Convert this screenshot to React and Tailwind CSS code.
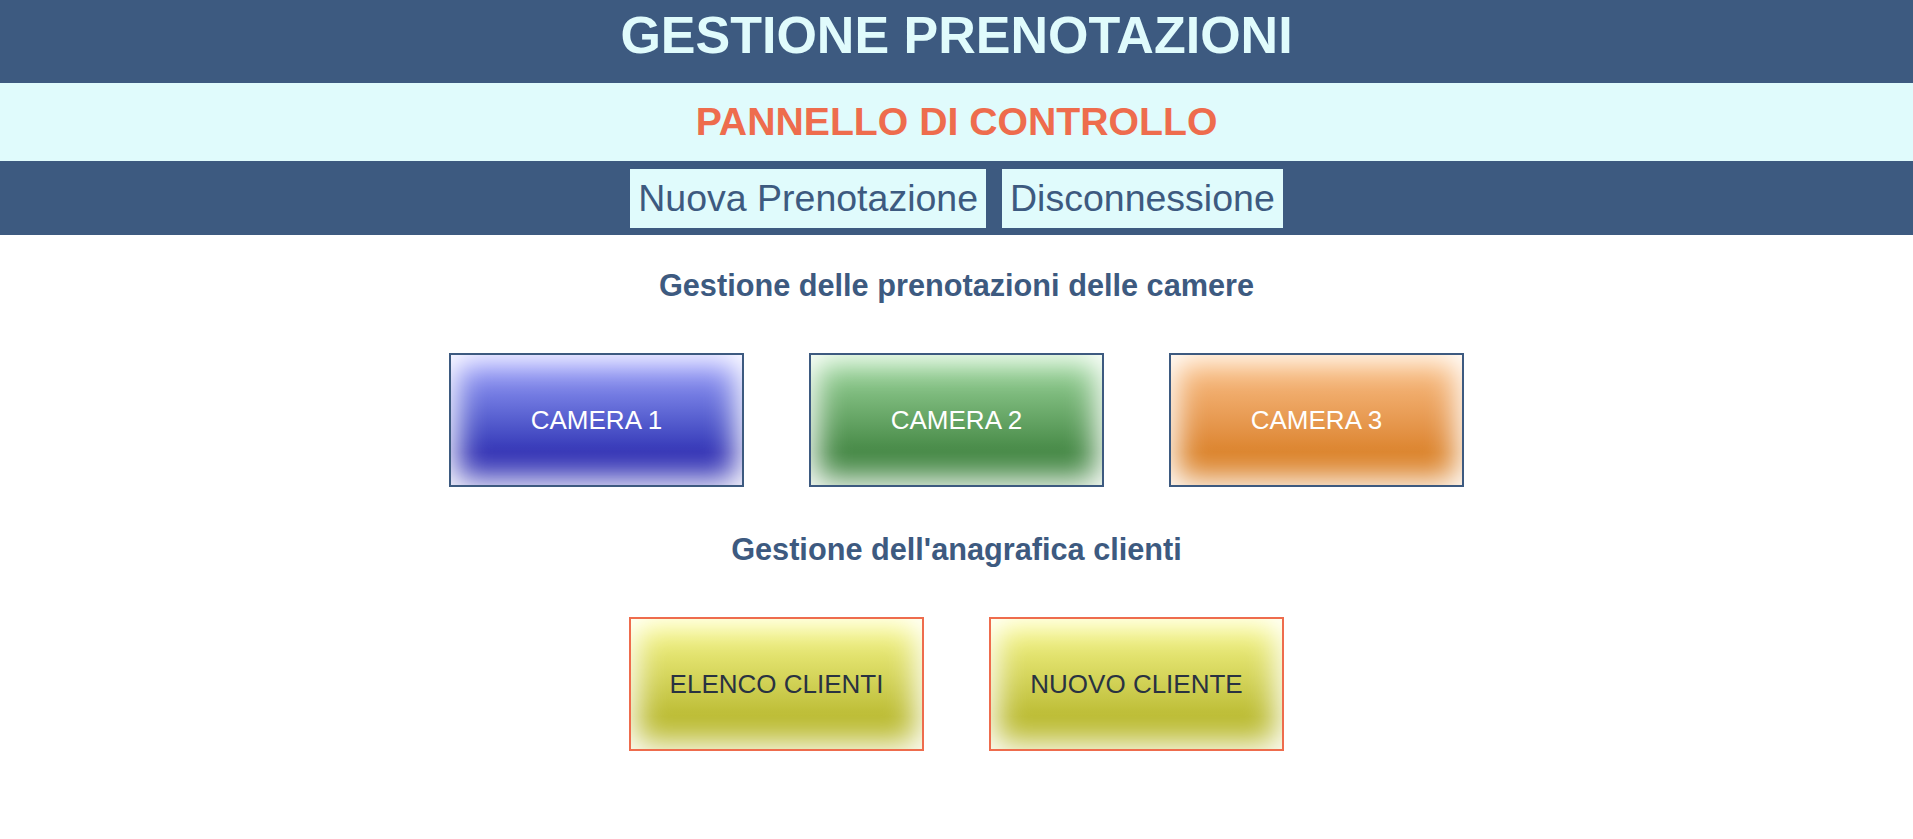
import React from "react";

const camere = [
  { label: "CAMERA 1", cls: "from-[#a6a8ff] to-[#3535b6]" },
  { label: "CAMERA 2", cls: "from-[#a2dca2] to-[#468946]" },
  { label: "CAMERA 3", cls: "from-[#fcc48c] to-[#dc842c]" },
];

const clienti = ["ELENCO CLIENTI", "NUOVO CLIENTE"];

function Box({ label, cls, border, text }) {
  return (
    <a
      href="#"
      className={`w-[295px] h-[134px] border-2 ${border} bg-linear-to-b ${cls} to-75% shadow-[inset_0_0_30px_6px_white] flex items-center justify-center text-[26px] leading-[30px] ${text}`}
    >
      {label}
    </a>
  );
}

export default function App() {
  return (
    <div className="min-h-screen bg-white font-['Liberation_Sans',Arial,sans-serif]">
      <header className="bg-[#3d5a80] text-center pt-[6px] pb-[18px]">
        <h1 className="text-[52px] leading-[59px] font-bold text-[#e0fbfc]">GESTIONE PRENOTAZIONI</h1>
      </header>

      <div className="bg-[#e0fbfc] text-center py-[17px]">
        <h2 className="text-[39.2px] leading-[44px] font-bold text-[#ee6c4d]">PANNELLO DI CONTROLLO</h2>
      </div>

      <nav className="bg-[#3d5a80] flex justify-center gap-4 pt-2 pb-[7px]">
        <a href="#" className="bg-[#e0fbfc] text-[#3d5a80] px-2 py-2 text-[37.5px] leading-[43px]">Nuova Prenotazione</a>
        <a href="#" className="bg-[#e0fbfc] text-[#3d5a80] px-2 py-2 text-[37.5px] leading-[43px]">Disconnessione</a>
      </nav>

      <main className="flex flex-col items-center">
        <h3 className="mt-[33px] text-[30.7px] leading-[35px] font-bold text-[#3d5a80]">
          Gestione delle prenotazioni delle camere
        </h3>
        <div className="mt-[50px] flex gap-[65px]">
          {camere.map((c) => (
            <Box key={c.label} label={c.label} cls={c.cls} border="border-[#3d5a80]" text="text-white" />
          ))}
        </div>

        <h3 className="mt-[45px] text-[30.7px] leading-[35px] font-bold text-[#3d5a80]">
          Gestione dell'anagrafica clienti
        </h3>
        <div className="mt-[50px] flex gap-[65px]">
          {clienti.map((c) => (
            <Box key={c} label={c} cls="from-[#fafa8c] to-[#bcbc33]" border="border-[#ee6c4d]" text="text-[#293241]" />
          ))}
        </div>
      </main>
    </div>
  );
}
